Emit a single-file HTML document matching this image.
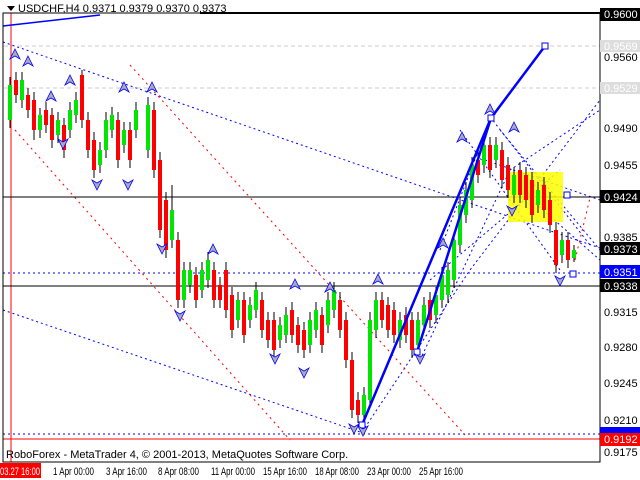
<!DOCTYPE html><html><head><style>body{margin:0;background:#fff}svg{display:block}text{font-family:"Liberation Sans",sans-serif;font-size:11px}</style></head><body>
<svg width="640" height="480" xmlns="http://www.w3.org/2000/svg">
<defs>
<path id="up" d="M0 -6 L5 4 L0 1 L-5 4 Z" fill="#aab" stroke="#00f" stroke-width="0.8"/>
<path id="dn" d="M0 6 L5 -4 L0 -1 L-5 -4 Z" fill="#aab" stroke="#00f" stroke-width="0.8"/>
</defs>
<rect width="640" height="480" fill="#fff"/>
<line x1="4" y1="46" x2="600" y2="46" stroke="#ccc" stroke-dasharray="4,3"/>
<line x1="4" y1="88" x2="600" y2="88" stroke="#ccc" stroke-dasharray="4,3"/>
<g fill="none" stroke="#0000ff" stroke-dasharray="2,3">
<path d="M3 42 L600 248"/><path d="M3 310 L360 432"/><path d="M3 434 H600"/><path d="M3 273 H600"/>
<path d="M362 432 L470 270 L600 100"/><path d="M440 250 L491 118 L590 245"/><path d="M420 360 L510 170 L600 110"/>
<path d="M460 130 L560 270"/><path d="M500 130 L600 250"/><path d="M430 280 L560 170"/><path d="M485 160 L600 200"/><path d="M520 190 L600 260"/>
</g>
<g fill="none" stroke="#ff0000" stroke-dasharray="2,4"><path d="M130 65 L465 435"/><path d="M15 130 L290 440"/><path d="M575 260 L590 198"/></g>
<line x1="11" y1="13" x2="11" y2="462" stroke="#f00"/>
<line x1="3" y1="197" x2="600" y2="197" stroke="#000"/>
<line x1="3" y1="286" x2="600" y2="286" stroke="#000"/>
<line x1="3" y1="439" x2="600" y2="439" stroke="#f00"/>
<path d="M3 26 L100 15" stroke="#00f" stroke-width="1.5"/>
<rect x="508" y="172" width="55" height="50" fill="#ffff00" opacity="0.85"/>
<g stroke="#000" stroke-width="1">
<path d="M10 77V128M16 72V103M22 72V108M28 88V118M34 92V140M40 108V138M46 102V133M52 108V148M58 112V143M64 118V158M70 102V138M76 92V123M82 70V128M88 112V158M94 132V178M100 142V173M106 112V158M112 107V138M118 112V168M124 122V153M130 122V168M136 102V138M148 97V158M154 102V178M160 152V238M166 192V258M172 185V248M178 232V308M184 262V308M190 262V293M196 267V308M202 262V298M208 252V288M214 262V308M220 277V308M226 262V318M232 287V338M238 292V328M244 292V343M250 297V328M256 282V318M262 292V338M268 312V348M274 312V358M280 317V348M286 307V343M292 302V343M298 317V353M304 322V358M310 312V353M316 302V338M322 307V353M328 292V333M334 282V318M340 292V338M346 312V368M352 352V418M358 392V423M364 387V423M370 312V408M376 292V338M382 292V328M388 297V338M394 302V343M400 312V348M406 307V343M412 312V358M418 312V353M424 297V333M430 292V328M436 287V323M442 267V308M448 262V303M454 232V288M460 197V253M466 182V223M472 157V208M478 152V183M484 137V173M490 137V178M496 137V168M502 142V188M508 157V198M514 167V203M520 162V203M526 167V208M532 172V223M538 182V213M544 177V218M550 192V233M556 222V273M562 232V263M568 232V268M574 245V262"/>
</g>
<path fill="#00e600" d="M8 85h4v35h-4zM20 80h4v20h-4zM38 115h4v15h-4zM56 120h4v15h-4zM68 110h4v20h-4zM74 100h4v15h-4zM98 150h4v15h-4zM104 120h4v30h-4zM110 115h4v15h-4zM122 130h4v15h-4zM134 110h4v20h-4zM146 105h4v45h-4zM170 210h4v30h-4zM182 270h4v30h-4zM188 270h4v15h-4zM200 270h4v20h-4zM206 260h4v20h-4zM236 300h4v20h-4zM248 305h4v15h-4zM254 290h4v20h-4zM278 325h4v15h-4zM284 315h4v20h-4zM308 320h4v25h-4zM314 310h4v20h-4zM326 300h4v25h-4zM332 290h4v20h-4zM362 395h4v20h-4zM368 320h4v80h-4zM374 300h4v30h-4zM398 320h4v20h-4zM416 320h4v25h-4zM422 305h4v20h-4zM434 295h4v20h-4zM440 275h4v25h-4zM446 270h4v25h-4zM452 240h4v40h-4zM458 205h4v40h-4zM464 190h4v25h-4zM470 165h4v35h-4zM482 145h4v20h-4zM494 145h4v15h-4zM512 175h4v20h-4zM536 190h4v15h-4zM560 240h4v15h-4zM572 250h4v8h-4z"/>
<path fill="#ff0000" d="M14 80h4v15h-4zM26 95h4v15h-4zM32 100h4v30h-4zM44 110h4v15h-4zM50 115h4v25h-4zM62 125h4v25h-4zM80 75h4v45h-4zM86 120h4v30h-4zM92 140h4v30h-4zM116 120h4v40h-4zM128 130h4v30h-4zM152 110h4v60h-4zM158 160h4v70h-4zM164 200h4v50h-4zM176 240h4v60h-4zM194 275h4v25h-4zM212 270h4v30h-4zM218 285h4v15h-4zM224 270h4v40h-4zM230 295h4v35h-4zM242 300h4v35h-4zM260 300h4v30h-4zM266 320h4v20h-4zM272 320h4v30h-4zM290 310h4v25h-4zM296 325h4v20h-4zM302 330h4v20h-4zM320 315h4v30h-4zM338 300h4v30h-4zM344 320h4v40h-4zM350 360h4v50h-4zM356 400h4v15h-4zM380 300h4v20h-4zM386 305h4v25h-4zM392 310h4v25h-4zM404 315h4v20h-4zM410 320h4v30h-4zM428 300h4v20h-4zM476 160h4v15h-4zM488 145h4v25h-4zM500 150h4v30h-4zM506 165h4v25h-4zM518 170h4v25h-4zM524 175h4v25h-4zM530 180h4v35h-4zM542 185h4v25h-4zM548 200h4v25h-4zM554 230h4v35h-4zM566 240h4v20h-4z"/>
<g stroke="#0000ff" stroke-width="2.5" fill="none"><path d="M362 425 L491 118 L545 46"/><path d="M417 352 L491 118"/></g>
<g fill="#fff" stroke="#00f"><rect x="488" y="115" width="6" height="6"/><rect x="542" y="43" width="6" height="6"/><rect x="414" y="349" width="6" height="6"/><rect x="359" y="422" width="6" height="6"/><rect x="564" y="192" width="6" height="6"/><rect x="570" y="271" width="6" height="6"/></g>
<use href="#up" x="15" y="55"/><use href="#up" x="28" y="62"/><use href="#up" x="51" y="97"/><use href="#up" x="70" y="81"/><use href="#up" x="124" y="88"/><use href="#up" x="152" y="88"/><use href="#up" x="213" y="250"/><use href="#up" x="295" y="285"/><use href="#up" x="330" y="288"/><use href="#up" x="378" y="280"/><use href="#up" x="462" y="138"/><use href="#up" x="490" y="110"/><use href="#up" x="514" y="128"/><use href="#up" x="443" y="244"/>
<use href="#dn" x="63" y="143"/><use href="#dn" x="97" y="184"/><use href="#dn" x="128" y="184"/><use href="#dn" x="162" y="248"/><use href="#dn" x="180" y="315"/><use href="#dn" x="275" y="358"/><use href="#dn" x="304" y="372"/><use href="#dn" x="354" y="428"/><use href="#dn" x="363" y="430"/><use href="#dn" x="420" y="358"/><use href="#dn" x="560" y="280"/><use href="#dn" x="512" y="210"/>
<rect x="3" y="13" width="597" height="449" fill="none" stroke="#000"/>
<line x1="200" y1="13" x2="600" y2="13" stroke="#000" stroke-width="2"/>
<path d="M7 6h8l-4 5z" fill="#000"/>
<text x="18" y="12">USDCHF,H4  0.9371 0.9379 0.9370 0.9373</text>
<text x="6" y="458">RoboForex - MetaTrader 4, © 2001-2013, MetaQuotes Software Corp.</text>
<g font-size="10"><text x="604" y="61">0.9560</text><text x="604" y="132">0.9490</text><text x="604" y="169">0.9455</text><text x="604" y="241">0.9385</text><text x="604" y="316">0.9315</text><text x="604" y="351">0.9280</text><text x="604" y="387">0.9245</text><text x="604" y="424">0.9210</text><text x="604" y="456">0.9175</text></g>
<g><rect x="600" y="8" width="40" height="13" fill="#000"/><text x="604" y="18" fill="#fff">0.9600</text>
<rect x="600" y="40" width="40" height="12" fill="#ddd"/><text x="604" y="50" fill="#fff">0.9569</text>
<rect x="600" y="82" width="40" height="12" fill="#ddd"/><text x="604" y="92" fill="#fff">0.9529</text>
<rect x="600" y="190" width="40" height="13" fill="#000"/><text x="604" y="201" fill="#fff">0.9424</text>
<rect x="600" y="242" width="40" height="13" fill="#000"/><text x="604" y="253" fill="#fff">0.9373</text>
<rect x="600" y="265" width="40" height="13" fill="#0000ff"/><text x="604" y="276" fill="#fff">0.9351</text>
<rect x="600" y="279" width="40" height="13" fill="#000"/><text x="604" y="290" fill="#fff">0.9338</text>
<rect x="600" y="427" width="40" height="8" fill="#0000ff"/>
<rect x="600" y="433" width="40" height="13" fill="#f00"/><text x="604" y="443" fill="#fff">0.9192</text></g>
<g font-size="11"><rect x="0" y="463" width="41" height="15" fill="#f00"/><text x="0" y="475" fill="#fff" textLength="40" lengthAdjust="spacingAndGlyphs">03.27 16:00</text>
<text x="53" y="475" textLength="41" lengthAdjust="spacingAndGlyphs">1 Apr 00:00</text><text x="106" y="475" textLength="41" lengthAdjust="spacingAndGlyphs">3 Apr 16:00</text><text x="158" y="475" textLength="41" lengthAdjust="spacingAndGlyphs">8 Apr 08:00</text><text x="211" y="475" textLength="44" lengthAdjust="spacingAndGlyphs">11 Apr 00:00</text><text x="263" y="475" textLength="44" lengthAdjust="spacingAndGlyphs">15 Apr 16:00</text><text x="315" y="475" textLength="44" lengthAdjust="spacingAndGlyphs">18 Apr 08:00</text><text x="367" y="475" textLength="44" lengthAdjust="spacingAndGlyphs">23 Apr 00:00</text><text x="419" y="475" textLength="44" lengthAdjust="spacingAndGlyphs">25 Apr 16:00</text></g>
</svg></body></html>
